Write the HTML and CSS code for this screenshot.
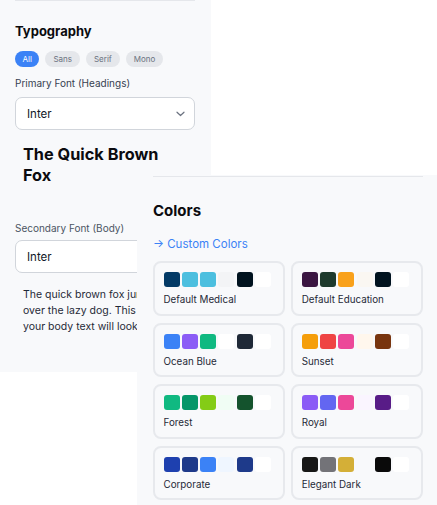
FILE: index.html
```html
<!DOCTYPE html>
<html>
<head>
    <title>Theme Settings</title>
    <link rel="stylesheet" href="styles.css">
</head>
<body>
    <div class="panel typo-panel">
        <section class="section">
            <h2 class="section-title">Typography</h2>
            <div class="chips">
                <span class="chip active">All</span>
                <span class="chip">Sans</span>
                <span class="chip">Serif</span>
                <span class="chip">Mono</span>
            </div>
            <label class="field-label">Primary Font (Headings)</label>
            <div class="select">
                <span>Inter</span>
                <svg class="chevron" width="9" height="6" viewBox="0 0 9 6"><path d="M1 1.2l3.5 3.3 3.5-3.3" fill="none" stroke="#6b7280" stroke-width="1.2" stroke-linecap="round" stroke-linejoin="round"/></svg>
            </div>
            <div class="preview-heading">The Quick Brown Fox</div>
            <label class="field-label label-body">Secondary Font (Body)</label>
            <div class="select">
                <span>Inter</span>
                <svg class="chevron" width="9" height="6" viewBox="0 0 9 6"><path d="M1 1.2l3.5 3.3 3.5-3.3" fill="none" stroke="#6b7280" stroke-width="1.2" stroke-linecap="round" stroke-linejoin="round"/></svg>
            </div>
            <p class="preview-body">The quick brown fox jumps over the lazy dog. This is how your body text will look.</p>
        </section>
    </div>

    <div class="panel colors-panel">
        <section class="section">
            <h2 class="section-title colors-title">Colors</h2>
            <a class="custom-link">→ Custom Colors</a>
            <div class="theme-grid">
                <div class="theme-card">
                    <div class="swatches">
                        <span style="background:#033a66"></span><span style="background:#4cbfdf"></span><span style="background:#4cbfdf"></span><span style="background:#f3f4f6"></span><span style="background:#01131f"></span><span style="background:#ffffff"></span>
                    </div>
                    <div class="theme-name">Default Medical</div>
                </div>
                <div class="theme-card">
                    <div class="swatches">
                        <span style="background:#3b1642"></span><span style="background:#1e3a2d"></span><span style="background:#f9a11b"></span><span style="background:#faf7f2"></span><span style="background:#01131f"></span><span style="background:#ffffff"></span>
                    </div>
                    <div class="theme-name">Default Education</div>
                </div>
                <div class="theme-card">
                    <div class="swatches">
                        <span style="background:#3b82f6"></span><span style="background:#8b5cf6"></span><span style="background:#10b981"></span><span style="background:#ffffff"></span><span style="background:#1f2937"></span><span style="background:#ffffff"></span>
                    </div>
                    <div class="theme-name">Ocean Blue</div>
                </div>
                <div class="theme-card">
                    <div class="swatches">
                        <span style="background:#f59e0b"></span><span style="background:#ef4444"></span><span style="background:#ec4899"></span><span style="background:#fff7ed"></span><span style="background:#78350f"></span><span style="background:#ffffff"></span>
                    </div>
                    <div class="theme-name">Sunset</div>
                </div>
                <div class="theme-card">
                    <div class="swatches">
                        <span style="background:#10b981"></span><span style="background:#059669"></span><span style="background:#84cc16"></span><span style="background:#f0fdf4"></span><span style="background:#14532d"></span><span style="background:#ffffff"></span>
                    </div>
                    <div class="theme-name">Forest</div>
                </div>
                <div class="theme-card">
                    <div class="swatches">
                        <span style="background:#8b5cf6"></span><span style="background:#6366f1"></span><span style="background:#ec4899"></span><span style="background:#faf5ff"></span><span style="background:#581c87"></span><span style="background:#ffffff"></span>
                    </div>
                    <div class="theme-name">Royal</div>
                </div>
                <div class="theme-card">
                    <div class="swatches">
                        <span style="background:#1e40af"></span><span style="background:#1e3a8a"></span><span style="background:#3b82f6"></span><span style="background:#eff6ff"></span><span style="background:#1e3a8a"></span><span style="background:#ffffff"></span>
                    </div>
                    <div class="theme-name">Corporate</div>
                </div>
                <div class="theme-card">
                    <div class="swatches">
                        <span style="background:#171717"></span><span style="background:#737378"></span><span style="background:#d4af37"></span><span style="background:#f8f9fb"></span><span style="background:#0a0a0a"></span><span style="background:#ffffff"></span>
                    </div>
                    <div class="theme-name">Elegant Dark</div>
                </div>
            </div>
        </section>
    </div>
</body>
</html>
```

FILE: styles.css
```css
body {
    margin: 0;
    font-family: Inter, "Noto Sans", sans-serif;
    background: #ffffff;
    color: #111827;
}
.panel {
    background: #f8f9fb;
    box-sizing: border-box;
}
.typo-panel {
    width: 211px;
    height: 372px;
    padding: 0 16px 0 15px;
    overflow: hidden;
}
.colors-panel {
    position: absolute;
    left: 137px;
    top: 175px;
    width: 302px;
    height: 340px;
    padding: 1px 16px 0 16px;
}
.section {
    border-top: 1px solid #e5e7eb;
}
.section-title {
    margin: 21px 0 0;
    font-size: 13px;
    line-height: 18px;
    font-weight: 700;
    color: #0b0b0f;
}
.chips {
    display: flex;
    gap: 6px;
    margin-top: 11px;
}
.chip {
    height: 16px;
    line-height: 16px;
    padding: 0 8px;
    border-radius: 8px;
    background: #e5e7eb;
    color: #6b7280;
    font-size: 8px;
}
.chip.active {
    background: #3b82f6;
    color: #ffffff;
    padding: 0 7.5px;
}
.field-label {
    display: block;
    margin-top: 9px;
    font-size: 10px;
    line-height: 14px;
    color: #374151;
}
.select {
    margin-top: 7px;
    height: 33px;
    box-sizing: border-box;
    border: 1.5px solid #d1d5db;
    border-radius: 7px;
    background: #ffffff;
    display: flex;
    align-items: center;
    justify-content: space-between;
    padding: 0 9px 0 11px;
    font-size: 11.5px;
    color: #111827;
}
.preview-heading {
    margin-top: 14px;
    padding: 0 8px;
    font-size: 16.3px;
    line-height: 21px;
    font-weight: 700;
    color: #0b0b0f;
}
.label-body {
    margin-top: 35px;
    color: #4b5563;
}
.label-body + .select {
    margin-top: 5px;
}
.preview-body {
    margin: 14px 0 0;
    padding: 0 22px 0 8px;
    font-size: 10.5px;
    line-height: 16px;
    color: #1f2937;
}
.colors-title {
    margin-top: 24px;
    font-size: 15px;
    line-height: 20px;
}
.custom-link {
    display: block;
    margin-top: 15px;
    font-size: 11.5px;
    line-height: 16px;
    color: #3b82f6;
}
.theme-grid {
    display: grid;
    grid-template-columns: 1fr 1fr;
    gap: 7px 6.5px;
    margin-top: 9px;
}
.theme-card {
    height: 54.5px;
    box-sizing: border-box;
    border: 2px solid #e7e9ed;
    border-radius: 8px;
    padding: 9px 8px 0 8.5px;
}
.swatches {
    display: flex;
    gap: 2.3px;
}
.swatches span {
    width: 16px;
    height: 15px;
    border-radius: 3px;
}
.theme-name {
    margin-top: 6px;
    font-size: 9.8px;
    line-height: 14px;
    color: #1f2937;
}
```
